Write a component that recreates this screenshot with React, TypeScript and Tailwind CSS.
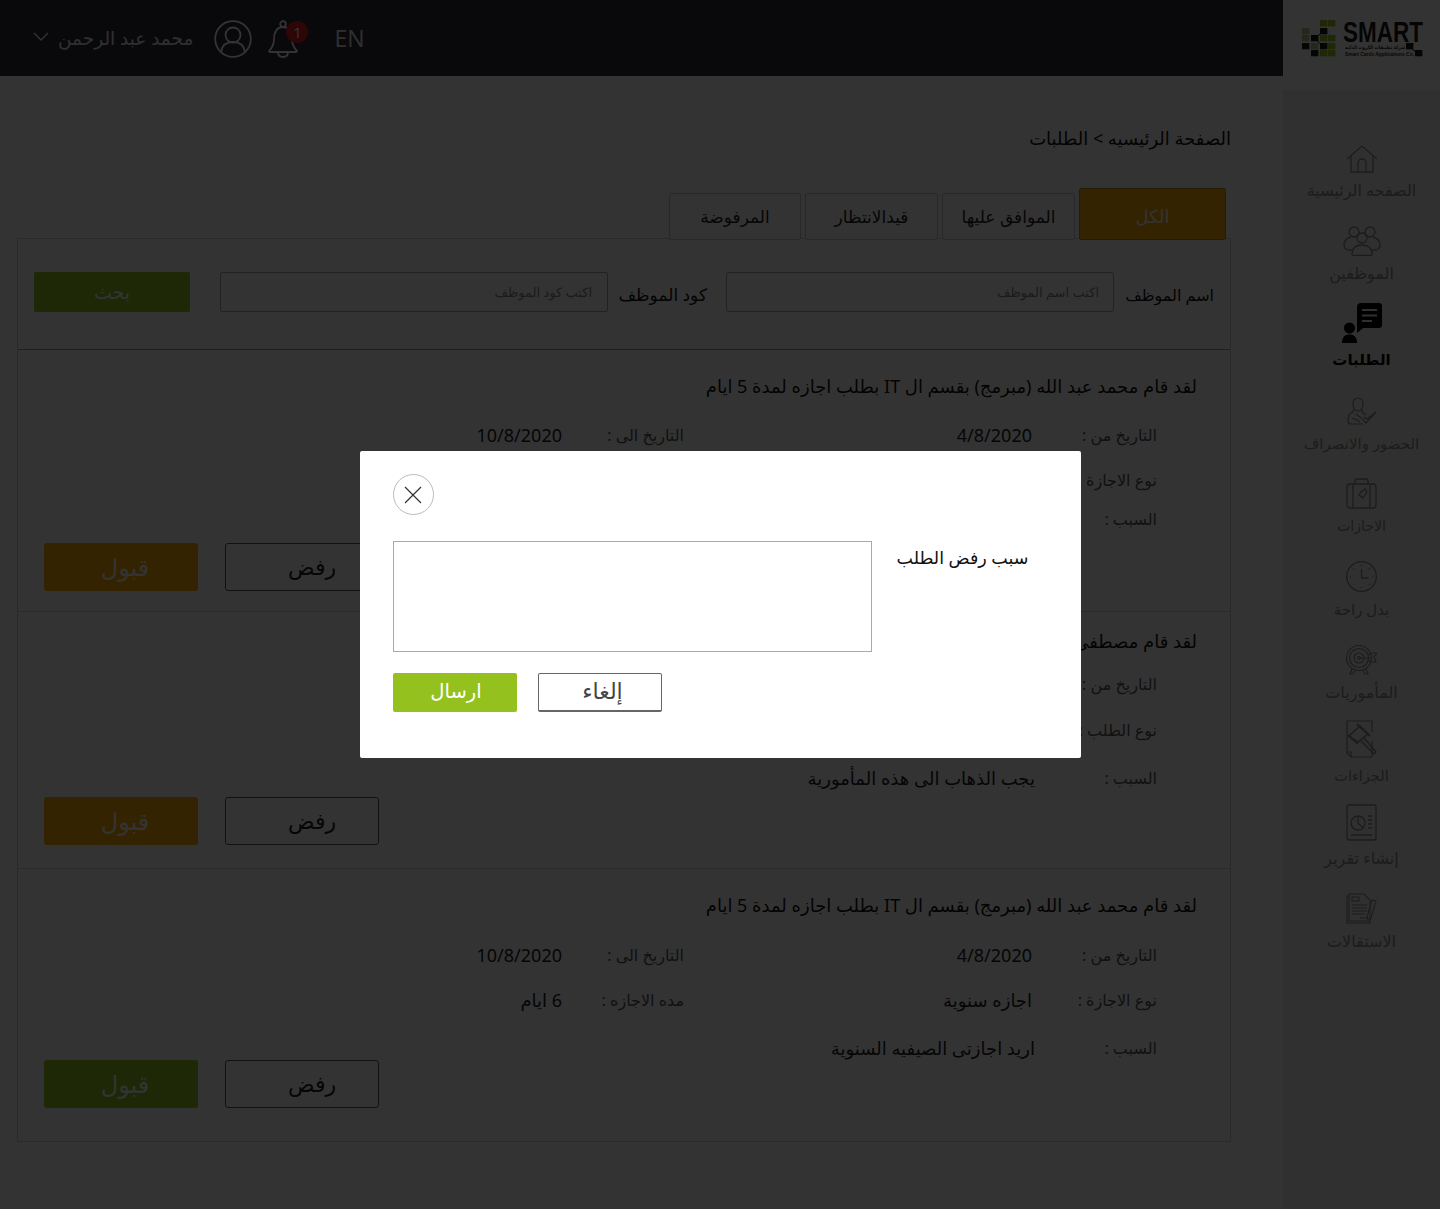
import { ReactNode } from "react";

const font = "font-['Noto_Sans','DejaVu_Sans',sans-serif]";

function HomeIcon() {
   return (
      <svg width="32" height="28" viewBox="0 0 32 28" fill="none" stroke="currentColor" strokeWidth="1.3">
         <path d="M1 14 16 1l15 13" />
         <path d="M5 11v16h22V11" />
         <path d="M12 27V18a4 4 0 0 1 8 0v9" />
      </svg>
   );
}

function PeopleIcon() {
   return (
      <svg width="38" height="30" viewBox="0 0 38 30" fill="none" stroke="currentColor" strokeWidth="1.3">
         <circle cx="11" cy="6" r="5" />
         <circle cx="27" cy="6" r="5" />
         <circle cx="19" cy="12" r="5" />
         <path d="M9 28c0-6 4-9 10-9s10 3 10 9c0 1-1 1.500-2 1.500H11c-1 0-2-.5-2-1.500Z" />
         <path d="M8 11c-4 1-7 4-7 8 0 2 1 4 4 5h4" />
         <path d="M30 11c4 1 7 4 7 8 0 2-1 4-4 5h-4" />
      </svg>
   );
}

function RequestsIcon() {
   return (
      <svg width="40" height="40" viewBox="0 0 40 40" fill="currentColor">
         <path d="M19 0h18a3 3 0 0 1 3 3v19a3 3 0 0 1-3 3H21l-6 5V4a4 4 0 0 1 4-4Z" />
         <circle cx="7.500" cy="25" r="5.500" />
         <path d="M0 40c0-6 3-8.500 7.500-8.500S15 34 15 40Z" />
         <path d="M20 6h15v2H20Zm0 5.500h15v2H20Zm0 5.500h10v2H20Z" fill="#f0f0f0" />
      </svg>
   );
}

function AttendanceIcon() {
   return (
      <svg width="30" height="29" viewBox="0 0 30 29" fill="none" stroke="currentColor" strokeWidth="1.2">
         <path d="M11 1c3 0 5 2 5 6s-2 7-5 7-5-3-5-7 2-6 5-6Z" />
         <path d="M7 12c0 2-1 3-3 4s-3 4-3 8c0 2 1 3 3 3h12" />
         <path d="M15 12c0 2 0 3 1 4l3 2" />
         <path d="M5 21c3 1 6 2 8 4M9 17l5 4" />
         <path d="m15 21 4 5 10-11-9 7-3-2" />
      </svg>
   );
}

function SuitcaseIcon() {
   return (
      <svg width="31" height="31" viewBox="0 0 31 31" fill="none" stroke="currentColor" strokeWidth="1.3">
         <rect x="1" y="6" width="29" height="24" rx="3" />
         <path d="M9 6V3a2 2 0 0 1 2-2h9a2 2 0 0 1 2 2v3" />
         <path d="M7 6v24M24 6v24" />
         <path d="m15 14 4-3 2 3-4 6-4-3Z" />
      </svg>
   );
}

function ClockIcon() {
   return (
      <svg width="31" height="31" viewBox="0 0 31 31" fill="none" stroke="currentColor" strokeWidth="1.3">
         <circle cx="15.500" cy="15.500" r="14.800" />
         <path d="M15.500 8v9h7" />
         <path
            d="M15.500 4v1M15.500 26v1M4 15.500h1M26 15.500h1M7.500 7.500l.7.7M23 23l.7.7M23.500 7.500l-.7.7M7.500 23.500l.7-.7"
            strokeWidth="1.500"
         />
      </svg>
   );
}

function TargetIcon() {
   return (
      <svg width="31" height="30" viewBox="0 0 31 30" fill="none" stroke="currentColor" strokeWidth="1.200">
         <circle cx="13" cy="13" r="12.500" />
         <circle cx="13" cy="13" r="9.500" />
         <circle cx="13" cy="13" r="5" />
         <circle cx="13" cy="13" r="1.500" />
         <path d="M13 13h13M22 10l3-2h6l-3 4 2 5h-6l-2-3" />
         <path d="m6 24-2 5h3l2-3M20 24l2 5h-3l-2-3" />
      </svg>
   );
}

function GavelIcon() {
   return (
      <svg width="31" height="38" viewBox="0 0 31 38" fill="none" stroke="currentColor" strokeWidth="1.200">
         <path d="M26 12V1H1v32l4 4h21V21" />
         <path d="M1 32h4v5" />
         <path d="m14 6 8 8-10 8-9-6Z" strokeWidth="1.500" />
         <path d="m11 4 13 12M2 15l10 9" strokeWidth="2" />
         <path d="m18 18 12 14-2 2-13-13" strokeWidth="1.500" />
      </svg>
   );
}

function ReportIcon() {
   return (
      <svg width="31" height="37" viewBox="0 0 31 37" fill="none" stroke="currentColor" strokeWidth="1.300">
         <rect x="1" y="1" width="29" height="35" rx="2" />
         <circle cx="12" cy="19" r="7" />
         <path d="M12 12v7l5 5" />
         <path d="M5 31h21M22 12h4M22 16h4M22 20h4M22 24h4" />
      </svg>
   );
}

function ResignIcon() {
   return (
      <svg width="31" height="31" viewBox="0 0 31 31" fill="none" stroke="currentColor" strokeWidth="1.100">
         <path d="M3 3H1v27h23v-2" />
         <path d="M3 1h15l6 6v21H3Z" />
         <rect x="6" y="4" width="7" height="4" />
         <path d="M6 12h15M6 15h15M6 18h15M6 21h13M14 25h7" />
         <path d="m26 7 4 1-5 17-3 2-1-3Z" />
      </svg>
   );
}

function Logo() {
   const green = "#95c11f";
   const dark = "#1d1d1b";
   const pale = "#b5c98a";
   const squares: [number, number, string][] = [
      [19, 0, green],
      [27, 0, green],
      [1, 8, pale],
      [19, 8, dark],
      [1, 15, pale],
      [10, 15, dark],
      [19, 15, green],
      [27, 15, green],
      [1, 23, dark],
      [10, 23, pale],
      [19, 23, dark],
      [27, 23, green],
      [10, 30, dark],
      [19, 30, green],
      [27, 30, green],
      [105, 23, dark],
      [114, 30, dark],
   ];
   return (
      <svg width="122" height="38" viewBox="0 0 122 38" className="overflow-visible">
         {squares.map(([x, y, color]) => (
            <rect key={`${x}-${y}`} x={x} y={y} width="7.400" height="6.300" fill={color} />
         ))}
         <path d="M14 19 22 11M14 19l9 8M110 28l7 6" stroke={dark} strokeWidth="1" />
         <text x="42" y="22" fontFamily="Liberation Sans" fontWeight="700" fontSize="29" textLength="80" lengthAdjust="spacingAndGlyphs" fill={dark}>
            SMART
         </text>
         <text x="44" y="29" fontFamily="DejaVu Sans" fontWeight="700" fontSize="5" textLength="60" lengthAdjust="spacingAndGlyphs" fill={dark}>
            شركة تطبيقات الكروت الذكية
         </text>
         <text x="44" y="36" fontFamily="Liberation Sans" fontWeight="700" fontSize="5.500" textLength="69" lengthAdjust="spacingAndGlyphs" fill={dark}>
            Smart Cards Applications Co.
         </text>
      </svg>
   );
}

const navItems: { label: string; icon: ReactNode; active?: boolean; textClass?: string }[] = [
   { label: "الصفحه الرئيسية", icon: <HomeIcon /> },
   { label: "الموظفين", icon: <PeopleIcon /> },
   { label: "الطلبات", icon: <RequestsIcon />, active: true },
   { label: "الحضور والانصراف", icon: <AttendanceIcon />, textClass: "text-[15px]" },
   { label: "الاجازات", icon: <SuitcaseIcon />, textClass: "text-[14px]" },
   { label: "بدل راحة", icon: <ClockIcon />, textClass: "text-[15px]" },
   { label: "المأموريات", icon: <TargetIcon /> },
   { label: "الجزاءات", icon: <GavelIcon />, textClass: "text-[14.500px]" },
   { label: "إنشاء تقرير", icon: <ReportIcon /> },
   { label: "الاستقالات", icon: <ResignIcon /> },
];

function Sidebar() {
   return (
      <aside className="w-[157px] shrink-0 bg-[#f0f0f0]">
         <div dir="ltr" className="h-[90px] bg-white pt-[20px] pl-[18px]">
            <Logo />
         </div>
         <nav className="pt-[42px] flex flex-col items-center">
            {navItems.map((item) =>
               item.active ? (
                  <a key={item.label} href="#" className="mt-[2px] h-[85px] flex flex-col items-center text-black">
                     <div className="h-[43px] flex items-end">{item.icon}</div>
                     <span className="mt-[6px] text-[15px] leading-5 font-bold">{item.label}</span>
                  </a>
               ) : (
                  <a key={item.label} href="#" className="h-[83px] flex flex-col items-center text-[#8a8a8a]">
                     <div className="h-[41px] flex items-end">{item.icon}</div>
                     <span className={`mt-[7px] leading-5 whitespace-nowrap ${item.textClass ?? "text-[16px]"}`}>{item.label}</span>
                  </a>
               )
            )}
         </nav>
      </aside>
   );
}

function TopBar() {
   return (
      <header className="h-[76px] bg-[#2d2d37] flex items-center justify-end pl-[33px] text-white">
         <span className="text-[23px] font-['Open_Sans'] opacity-90">EN</span>
         <div className="relative mr-[34px] ml-[16px] mt-[2px]">
            <svg width="32" height="38" viewBox="0 0 32 38" fill="none" stroke="currentColor" strokeWidth="1.800">
               <circle cx="15" cy="4" r="2.800" />
               <path d="M1 31c3-3 5-6 5-12 0-7 3-12 9-12s9 5 9 12c0 6 2 9 5 12 0 1-1 1-2 1H3c-1 0-2 0-2-1Z" />
               <path d="M10 32c0 3 2 5 5 5s5-2 5-5" />
            </svg>
            <span className="absolute top-[1px] -right-[8px] size-[22px] rounded-full bg-[#e31e24] text-[15px] leading-[22px] text-center font-['Open_Sans']">
               1
            </span>
         </div>
         <svg width="38" height="38" viewBox="0 0 38 38" fill="none" stroke="currentColor" strokeWidth="1.800" className="mt-[1px]">
            <circle cx="19" cy="19" r="17.800" />
            <circle cx="19" cy="15" r="7.500" />
            <path d="M7 32c1-7 6-10 12-10s11 3 12 10" />
         </svg>
         <span className="mr-[21px] text-[18.500px] opacity-90">محمد عبد الرحمن</span>
         <svg width="16" height="10" viewBox="0 0 16 10" fill="none" stroke="currentColor" strokeWidth="1.300" className="mr-[9px] -mt-[3px]">
            <path d="m1 1 7 7 7-7" />
         </svg>
      </header>
   );
}

function FilterTabs() {
   const tabs = ["الموافق عليها", "قيدالانتظار", "المرفوضة"];
   return (
      <div className="relative mr-[57px] -mb-[2px] flex items-end gap-1">
         <button className="w-[147px] h-[52px] pt-1 bg-[#ffaf00] border border-[#b08a20] rounded-[2px] text-white text-[18px]">
            الكل
         </button>
         {tabs.map((tab, i) => (
            <button
               key={tab}
               className={`${i === 2 ? "w-[132px]" : "w-[133px]"} h-[47px] bg-white border border-[#c8c8c8] rounded-[2px] text-[#222] text-[17px]`}
            >
               {tab}
            </button>
         ))}
      </div>
   );
}

function SearchBar() {
   return (
      <div className="h-[111px] border-b border-[#999] flex items-start pt-[33px] pr-[16px]">
         <label className="w-[100px] text-[16px] leading-10 text-[#111] mt-[3px]">اسم الموظف</label>
         <div className="w-[388px] h-10 border border-[#aaa] rounded-[2px] px-[14px] text-[13px] leading-[38px] text-[#888]">
            اكتب اسم الموظف
         </div>
         <label className="w-[118px] pr-[19px] text-[17px] leading-10 text-[#111] mt-[3px]">كود الموظف</label>
         <div className="w-[388px] h-10 border border-[#aaa] rounded-[2px] px-[15px] text-[13px] leading-[38px] text-[#888]">
            اكتب كود الموظف
         </div>
         <button className="mr-[30px] w-[156px] h-10 bg-[#95c11f] rounded-[2px] text-white text-[19px]">بحث</button>
      </div>
   );
}

type RequestData = {
   title: string;
   height: number;
   titleTop: number;
   rows: { gap: number; right: [string, string]; left?: [string, string] }[];
   btnBottom: number;
   accept: string;
   last?: boolean;
};

const requests: RequestData[] = [
   {
      title: "لقد قام محمد عبد الله (مبرمج) بقسم ال IT بطلب اجازه لمدة 5 ايام",
      height: 262,
      titleTop: 24,
      rows: [
         { gap: 11, right: ["التاريخ من :", "4/8/2020"], left: ["التاريخ الى :", "10/8/2020"] },
         { gap: 21, right: ["نوع الاجازة :", "اجازه سنوية"], left: ["مده الاجازه :", "6 ايام"] },
         { gap: 15, right: ["السبب :", "اريد اجازتى الصيفيه السنوية"] },
      ],
      btnBottom: 20,
      accept: "bg-[#ffaf00]",
   },
   {
      title: "لقد قام مصطفى احمد (مبرمج) بقسم ال IT بطلب مأمورية لمدة 5 ايام",
      height: 257,
      titleTop: 17,
      rows: [
         { gap: 5, right: ["التاريخ من :", "4/8/2020"], left: ["التاريخ الى :", "10/8/2020"] },
         { gap: 22, right: ["نوع الطلب :", "مأمورية"], left: ["مده الطلب :", "6 ايام"] },
         { gap: 24, right: ["السبب :", "يجب الذهاب الى هذه المأمورية"] },
      ],
      btnBottom: 23,
      accept: "bg-[#ffaf00]",
   },
   {
      title: "لقد قام محمد عبد الله (مبرمج) بقسم ال IT بطلب اجازه لمدة 5 ايام",
      height: 272,
      titleTop: 24,
      rows: [
         { gap: 12, right: ["التاريخ من :", "4/8/2020"], left: ["التاريخ الى :", "10/8/2020"] },
         { gap: 21, right: ["نوع الاجازة :", "اجازه سنوية"], left: ["مده الاجازه :", "6 ايام"] },
         { gap: 24, right: ["السبب :", "اريد اجازتى الصيفيه السنوية"] },
      ],
      btnBottom: 33,
      accept: "bg-[#95c11f]",
      last: true,
   },
];

function RequestCard({ data }: { data: RequestData }) {
   return (
      <div
         className={`flex flex-col ${data.last ? "" : "border-b border-[#d0d0d0]"}`}
         style={{ height: data.height }}
      >
         <h3 className="mr-[33px] text-[18px] leading-6 text-[#111]" style={{ marginTop: data.titleTop }}>
            {data.title}
         </h3>
         <div className="mt-[14px] pr-[73px]">
            {data.rows.map((row) => (
               <div key={row.right[0]} className="h-6 flex items-center" style={{ marginTop: row.gap }}>
                  <span className="w-[125px] text-[16px] text-[#555]">{row.right[0]}</span>
                  <span className={`w-[348px] text-[18px] text-[#222] ${row.left ? "" : "-mr-[3px]"}`}>{row.right[1]}</span>
                  {row.left && (
                     <>
                        <span className="w-[122px] text-[16px] text-[#555]">{row.left[0]}</span>
                        <span className="text-[18px] text-[#222]">{row.left[1]}</span>
                     </>
                  )}
               </div>
            ))}
         </div>
         <div className="flex-1" />
         <div className="flex justify-end gap-[27px] pl-[26px]" style={{ marginBottom: data.btnBottom }}>
            <button className="w-[154px] h-12 pb-0.5 pl-[20px] rounded-[3px] border border-[#555] text-[#222] text-[22px]">رفض</button>
            <button className={`w-[154px] h-12 pl-2 rounded-[3px] text-white text-[24px] ${data.accept}`}>قبول</button>
         </div>
      </div>
   );
}

function RejectModal() {
   return (
      <div className="fixed inset-0 bg-black/80 flex items-center justify-center">
         <div className="w-[721px] h-[307px] bg-white rounded-[2px] pt-[23px] pr-[52px] pl-[33px] text-[#222]">
            <div className="flex justify-end">
               <button className="size-[41px] rounded-full border border-[#bbb] flex items-center justify-center">
                  <svg width="20" height="20" viewBox="0 0 20 20" fill="none" stroke="#333" strokeWidth="1.200">
                     <path d="m2 2 16 16M18 2 2 18" />
                  </svg>
               </button>
            </div>
            <div className="mt-[26px] flex justify-between items-start">
               <label className="text-[17.500px] leading-[33px] text-[#111]">سبب رفض الطلب</label>
               <textarea className="w-[479px] h-[111px] border border-[#aaa] resize-none" />
            </div>
            <div className="mt-[21px] flex justify-end gap-[21px]">
               <button className="w-[124px] h-[39px] pb-1 pl-[6px] rounded-[2px] border border-[#666] border-b-2 text-[#444] text-[22px]">
                  إلغاء
               </button>
               <button className="w-[124px] h-[39px] pb-1 pl-[3px] rounded-[2px] bg-[#95c11f] text-white text-[19.500px]">ارسال</button>
            </div>
         </div>
      </div>
   );
}

export default function App() {
   return (
      <div dir="rtl" className={`flex min-h-[1209px] bg-white ${font}`}>
         <Sidebar />
         <main className="flex-1 flex flex-col">
            <TopBar />
            <h2 className="mr-[52px] mt-[50px] mb-[1px] text-[18px] leading-6 text-[#111]">الصفحة الرئيسيه &gt; الطلبات</h2>
            <div className="mt-[37px]">
               <FilterTabs />
            </div>
            <div className="mr-[52px] ml-[17px] border border-[#d0d0d0]">
               <SearchBar />
               {requests.map((data, i) => (
                  <RequestCard key={i} data={data} />
               ))}
            </div>
         </main>
         <RejectModal />
      </div>
   );
}
